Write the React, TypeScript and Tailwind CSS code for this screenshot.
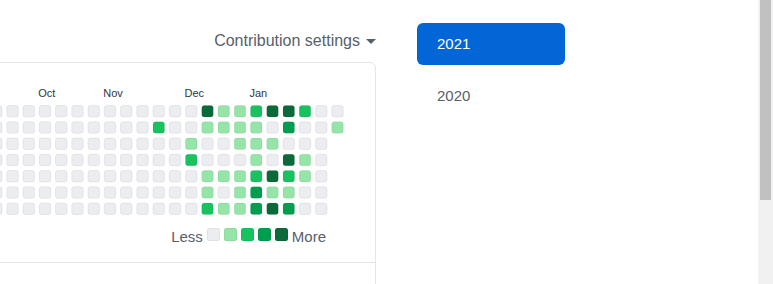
import React from "react";

const LV = ["#ebedf0", "#94e5a7", "#17c25f", "#019e4f", "#0a6a39"];

// levels keyed "row-visualCol" for visual cols 0..20 (col -1 all gray)
const marks: Record<string, number> = {
  "0-12": 4, "0-13": 1, "0-14": 1, "0-15": 2, "0-16": 4, "0-17": 4, "0-18": 2,
  "1-9": 2, "1-12": 1, "1-13": 1, "1-14": 1, "1-15": 1, "1-17": 3, "1-20": 1,
  "2-11": 1, "2-14": 1, "2-15": 1, "2-16": 1,
  "3-11": 2, "3-15": 1, "3-17": 4, "3-18": 1,
  "4-12": 1, "4-13": 1, "4-14": 1, "4-15": 2, "4-16": 4, "4-17": 2, "4-18": 1,
  "5-12": 1, "5-14": 1, "5-15": 3, "5-16": 1, "5-17": 1,
  "6-12": 2, "6-13": 1, "6-14": 1, "6-15": 3, "6-16": 4, "6-17": 3,
};

const months: [string, number][] = [
  ["Oct", 2],
  ["Nov", 6],
  ["Dec", 11],
  ["Jan", 15],
];

function Graph() {
  const cells: React.ReactNode[] = [];
  for (let c = -1; c <= 20; c++) {
    for (let r = 0; r < 7; r++) {
      if (c === 20 && r > 1) continue;
      const lvl = marks[`${r}-${c}`] ?? 0;
      const x = 16.25 * (c + 1);
      const y = 42 + 16.25 * r;
      cells.push(
        <rect
          key={`${c}-${r}`}
          x={x + 0.5}
          y={y + 0.5}
          width={11.5}
          height={11.5}
          rx={2.5}
          ry={2.5}
          fill={LV[lvl]}
          stroke="rgba(27,31,35,0.07)"
          strokeWidth={1}
        />
      );
    }
  }
  return (
    <svg width={353.75} height={152} className="block">
      {months.map(([m, c]) => (
        <text
          key={m}
          x={16.25 * (c + 1) - 0.5}
          y={34}
          fontSize={11}
          fill="#2f363d"
          fontFamily="'Liberation Sans', Arial, sans-serif"
        >
          {m}
        </text>
      ))}
      {cells}
    </svg>
  );
}

export default function App() {
  return (
    <div className="flex h-[284px] w-[773px] overflow-hidden bg-white font-['Liberation_Sans',Arial,sans-serif]">
      <div className="flex flex-1 items-start">
        <div className="w-[376px] flex-none">
          <div className="mt-[29px] flex h-[24px] items-center justify-end text-[16px] leading-[24px] text-[#586069]">
            <span>Contribution settings</span>
            <span className="ml-[6px] mt-[1px] h-0 w-0 border-x-[5px] border-t-[5px] border-x-transparent border-t-[#586069]" />
          </div>
          <div className="ml-[-600px] mt-[9px] rounded-[6px] border border-[#e1e4e8]">
            <div className="flex justify-end pr-[31.5px]">
              <Graph />
            </div>
            <div className="mt-[13px] flex h-[18px] items-start justify-end gap-[4px] pr-[49px] text-[15px] leading-[18px] text-[#586069]">
              <span>Less</span>
              {LV.map((c) => (
                <span
                  key={c}
                  className="h-[13px] w-[13px] rounded-[2.5px] border border-[rgba(27,31,35,0.06)]"
                  style={{ backgroundColor: c }}
                />
              ))}
              <span>More</span>
            </div>
            <div className="mt-[16px] h-[60px] border-t border-[#e1e4e8]" />
          </div>
        </div>
        <div className="ml-[41px] w-[148px] flex-none pt-[23px]">
          <div className="flex h-[42px] items-center rounded-[6px] bg-[#0366d6] pl-[20px] text-[15px] leading-[18px] text-white">
            2021
          </div>
          <div className="mt-[10px] flex h-[42px] items-center pl-[20px] text-[15px] leading-[18px] text-[#586069]">
            2020
          </div>
        </div>
      </div>
      <div className="h-[284px] w-[15px] flex-none bg-[#f1f1f1] px-[2px]">
        <div className="h-[200px] w-[11px] bg-[#c1c1c1]" />
      </div>
    </div>
  );
}
